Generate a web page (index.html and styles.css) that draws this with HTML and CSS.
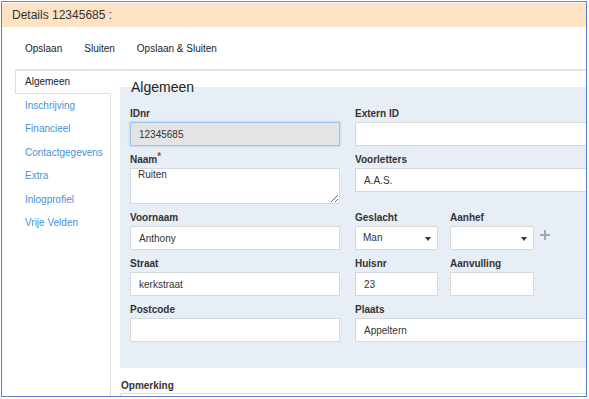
FILE: index.html
```html
<!DOCTYPE html>
<html lang="nl">
<head>
    <meta charset="UTF-8">
    <title>Details 12345685</title>
    <link rel="stylesheet" href="styles.css">
</head>
<body>

<div class="window">
    <div class="header">Details 12345685 :</div>

    <div class="toolbar">
        <span class="tool">Opslaan</span>
        <span class="tool">Sluiten</span>
        <span class="tool">Opslaan &amp; Sluiten</span>
    </div>

    <div class="main">
        <div class="tabs">
            <div class="tab active">Algemeen</div>
            <a class="tab">Inschrijving</a>
            <a class="tab">Financieel</a>
            <a class="tab">Contactgegevens</a>
            <a class="tab">Extra</a>
            <a class="tab">Inlogprofiel</a>
            <a class="tab">Vrije Velden</a>
        </div>

        <div class="content">
            <div class="title">Algemeen</div>
            <div class="panel">
                <div class="grid">
                    <div class="field">
                        <label>IDnr</label>
                        <input class="input locked" value="12345685">
                    </div>
                    <div class="field">
                        <label>Extern ID</label>
                        <input class="input" value="">
                    </div>

                    <div class="field">
                        <label>Naam<span class="req">*</span></label>
                        <textarea class="input area">Ruiten</textarea>
                    </div>
                    <div class="field">
                        <label>Voorletters</label>
                        <input class="input" value="A.A.S.">
                    </div>

                    <div class="field">
                        <label>Voornaam</label>
                        <input class="input" value="Anthony">
                    </div>
                    <div class="pair">
                        <div class="field">
                            <label>Geslacht</label>
                            <div class="select">Man</div>
                        </div>
                        <div class="field">
                            <label>Aanhef</label>
                            <div class="select"></div>
                        </div>
                        <svg class="plus" width="10" height="10" viewBox="0 0 10 10">
                            <path d="M5 0V10M0 5H10" stroke="#a9a9a9" stroke-width="2"/>
                        </svg>
                    </div>

                    <div class="field">
                        <label>Straat</label>
                        <input class="input" value="kerkstraat">
                    </div>
                    <div class="pair">
                        <div class="field">
                            <label>Huisnr</label>
                            <input class="input" value="23">
                        </div>
                        <div class="field">
                            <label>Aanvulling</label>
                            <input class="input" value="">
                        </div>
                    </div>

                    <div class="field">
                        <label>Postcode</label>
                        <input class="input" value="">
                    </div>
                    <div class="field">
                        <label>Plaats</label>
                        <input class="input" value="Appeltern">
                    </div>
                </div>
            </div>

            <div class="remark">
                <label>Opmerking</label>
                <textarea class="input remark-box"></textarea>
            </div>
        </div>
    </div>
</div>

</body>
</html>
```

FILE: styles.css
```css
body {
    margin: 0;
    background-color: #fff;
    font-family: "Liberation Sans", Arial, sans-serif;
    color: #333;
}
.window {
    box-sizing: border-box;
    width: 586px;
    height: 396px;
    margin: 1px 0 0 1px;
    padding-top: 1px;
    border: 1px solid #5b7fcb;
    overflow: hidden;
    background-color: #fff;
}
.header {
    height: 24px;
    line-height: 24px;
    padding-left: 10px;
    font-size: 12px;
    background-color: #fde3c3;
}
.toolbar {
    display: flex;
    align-items: center;
    gap: 22px;
    height: 42px;
    padding-left: 23px;
    font-size: 10px;
    color: #222;
}
.main {
    display: flex;
    margin-left: 13px;
    border-top: 2px solid #e6e6e6;
    height: 400px;
}
.tabs {
    width: 95px;
    flex-shrink: 0;
    border-right: 1px solid #dedede;
}
.tab {
    display: block;
    padding-left: 10px;
    line-height: 23.4px;
    font-size: 10px;
    color: #4a91d4;
}
.tab.active {
    height: 22px;
    line-height: 22px;
    padding-left: 9px;
    margin-right: -1px;
    border-left: 1px solid #dedede;
    border-bottom: 1px solid #dedede;
    background-color: #fff;
    color: #222;
}
.content {
    padding-left: 9px;
    min-width: 0;
}
.title {
    position: relative;
    margin: 8px 0 -8px 11px;
    font-size: 14px;
    line-height: 16px;
    color: #222;
}
.panel {
    width: 500px;
    padding: 18px 0 26px 10px;
    background-color: #e7eef5;
}
.grid {
    display: grid;
    grid-template-columns: 210px 250px;
    column-gap: 15px;
    row-gap: 5px;
}
.field {
    display: flex;
    flex-direction: column;
}
label {
    display: block;
    font-size: 10px;
    font-weight: bold;
    line-height: 14px;
    padding-top: 2px;
    margin-bottom: 1px;
    color: #333;
}
.req {
    color: #e02b2b;
    position: relative;
    top: -3px;
}
.input {
    box-sizing: border-box;
    height: 24px;
    padding: 0 8px;
    border: 1px solid #d6d9dc;
    background-color: #fff;
    font-family: "Liberation Sans", Arial, sans-serif;
    font-size: 10px;
    color: #333;
    outline: none;
}
.input.locked {
    background-color: #e4e4e4;
    border-color: #9fc4ea;
    box-shadow: 0 0 2px rgba(102, 160, 220, 0.6);
}
.area {
    height: 36px;
    padding: 0 7px;
    line-height: 12px;
    resize: vertical;
}
.pair {
    display: grid;
    grid-template-columns: 83px 84px 10px;
    column-gap: 12px;
    align-items: end;
}
.select {
    box-sizing: border-box;
    position: relative;
    height: 24px;
    line-height: 22px;
    padding-left: 7px;
    border: 1px solid #d6d9dc;
    background-color: #fff;
    font-size: 10px;
    color: #333;
}
.select::after {
    content: "";
    position: absolute;
    right: 6px;
    top: 10px;
    border-left: 3px solid transparent;
    border-right: 3px solid transparent;
    border-top: 4px solid #333;
}
.plus {
    margin: 0 0 10px -6px;
}
.remark {
    margin-top: 9px;
}
.remark label {
    margin-left: 1px;
    margin-bottom: 0;
}
.remark-box {
    display: block;
    width: 500px;
    height: 60px;
    border-color: #dcdcdc;
    resize: none;
}
```
